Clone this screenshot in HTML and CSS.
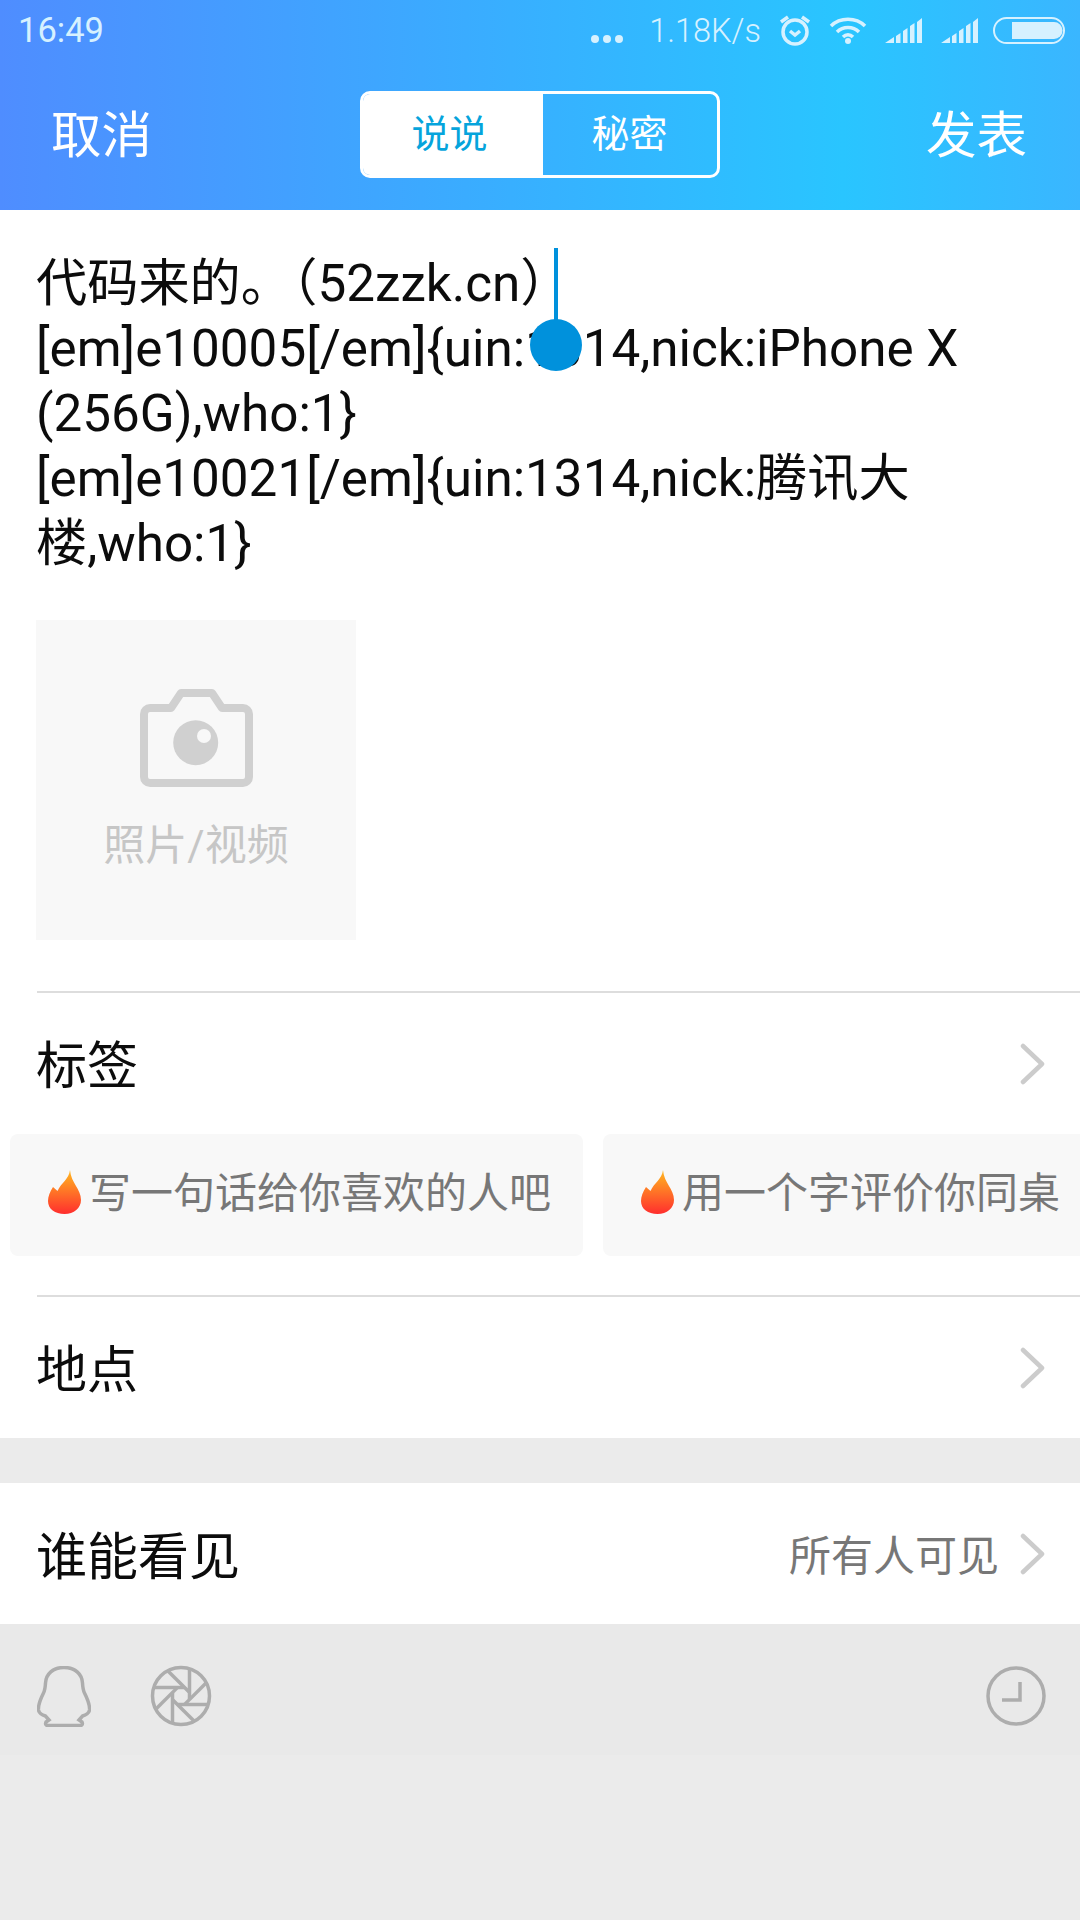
FILE: index.html

```html
<!DOCTYPE html>
<html>
<head>
	<meta charset="utf-8">
	<title>发表说说</title>
	<link rel="stylesheet" href="styles.css">
</head>
<body>
	<div class="page">

		<div class="header">
			<div class="status">
				<span class="time">16:49</span>
				<div class="status-right">
					<svg class="st-dots" width="32" height="10" viewBox="0 0 32 10"><circle cx="4" cy="5" r="4"/><circle cx="16" cy="5" r="4"/><circle cx="28" cy="5" r="4"/></svg>
					<span class="speed">1.18K/s</span>
					<svg class="st-alarm" width="32" height="32" viewBox="0 0 32 32"><circle class="line" cx="16" cy="18" r="12"/><path class="line" d="M11 17l5 4 5-4"/><path class="line" d="M2 8l7-5M30 8l-7-5"/></svg>
					<svg class="st-wifi" width="38" height="28" viewBox="0 0 38 28"><path class="line" d="M2 10C11 1 27 1 36 10"/><path class="line" d="M8 16C14 10 24 10 30 16"/><path class="line" d="M14 21C17 18 21 18 24 21"/><circle cx="19" cy="25" r="3"/></svg>
					<svg class="st-signal" width="38" height="26" viewBox="0 0 38 26"><path d="M0 25L9 19V25ZM11 18L15.500 15V25H11ZM18 13L22.500 10V25H18ZM25 8L29.500 5V25H25ZM32 4L37 0V25H32Z"/></svg>
					<svg class="st-signal" width="38" height="26" viewBox="0 0 38 26"><path d="M0 25L9 19V25ZM11 18L15.500 15V25H11ZM18 13L22.500 10V25H18ZM25 8L29.500 5V25H25ZM32 4L37 0V25H32Z"/></svg>
					<svg class="st-battery" width="72" height="27" viewBox="0 0 72 27"><rect class="thin" x="1" y="1" width="70" height="25" rx="12.500"/><path d="M19 5H61a8.500 8.500 0 0 1 0 17H19Z"/></svg>
				</div>
			</div>
			<div class="nav">
				<span class="nav-btn">取消</span>
				<div class="seg">
					<span class="seg-item seg-on">说说</span>
					<span class="seg-item">秘密</span>
				</div>
				<span class="nav-btn">发表</span>
			</div>
		</div>

		<div class="editor">
			<div class="content">代码来的。（52zzk.cn）<br>[em]e10005[/em]{uin:1314,nick:iPhone X<br>(256G),who:1}<br>[em]e10021[/em]{uin:1314,nick:腾讯大<br>楼,who:1}</div>
			<div class="cursor"></div>
			<div class="cursor-knob"></div>

			<div class="photo">
				<svg class="photo-icon" width="113" height="98" viewBox="0 0 113 98">
					<path d="M10 19H31L41 4H72L82 19H103a6 6 0 0 1 6 6V88a6 6 0 0 1-6 6H10a6 6 0 0 1-6-6V25a6 6 0 0 1 6-6Z"/>
					<circle class="lens" cx="55.700" cy="53.700" r="22.500"/>
					<circle class="glint" cx="64" cy="47" r="7"/>
				</svg>
				<span class="photo-label">照片/视频</span>
			</div>
		</div>

		<div class="divider"></div>
		<div class="row row-tag">
			<span class="row-title">标签</span>
			<svg class="chevron" width="26" height="42" viewBox="0 0 26 42"><path d="M3 3L22 21L3 39"/></svg>
		</div>

		<div class="chips">
			<div class="chip">
				<svg class="flame" width="33" height="44" viewBox="0 0 33 44"><path fill="url(#fire)" d="M22 0C21 9 13 13 9.500 21L5 17C2 22 0 26 0 31C0 39 7 44 16.500 44C26 44 33 38 33 30C33 19 23 13 22 0Z"/></svg>
				<span>写一句话给你喜欢的人吧</span>
			</div>
			<div class="chip">
				<svg class="flame" width="33" height="44" viewBox="0 0 33 44"><path fill="url(#fire)" d="M22 0C21 9 13 13 9.500 21L5 17C2 22 0 26 0 31C0 39 7 44 16.500 44C26 44 33 38 33 30C33 19 23 13 22 0Z"/></svg>
				<span>用一个字评价你同桌</span>
			</div>
		</div>

		<div class="divider"></div>
		<div class="row row-place">
			<span class="row-title">地点</span>
			<svg class="chevron" width="26" height="42" viewBox="0 0 26 42"><path d="M3 3L22 21L3 39"/></svg>
		</div>

		<div class="band"></div>

		<div class="row row-who">
			<span class="row-title">谁能看见</span>
			<span class="row-value">所有人可见</span>
			<svg class="chevron" width="26" height="42" viewBox="0 0 26 42"><path d="M3 3L22 21L3 39"/></svg>
		</div>

		<div class="toolbar">
			<svg class="tool-qq" width="54" height="61" viewBox="0 0 54 61"><path d="M27 1.500C16 1.500 9 8 8.500 17C8.300 21 8 24 6.500 27C3.500 33 1 39 1.500 44C2 47.500 5 49 8.500 50L12 54L9 56C8 58 9 59.500 11 59.500H43C45 59.500 46 58 45 56L42 54L45.500 50C49 49 52 47.500 52.500 44C53 39 50.500 33 47.500 27C46 24 45.700 21 45.500 17C45 8 38 1.500 27 1.500Z"/></svg>
			<svg class="tool-shutter" width="62" height="62" viewBox="-31 -31 62 62">
				<circle r="28.500"/>
				<path d="M8.500-28V3"/>
				<path transform="rotate(45)" d="M8.500-28V3"/>
				<path transform="rotate(90)" d="M8.500-28V3"/>
				<path transform="rotate(135)" d="M8.500-28V3"/>
				<path transform="rotate(180)" d="M8.500-28V3"/>
				<path transform="rotate(225)" d="M8.500-28V3"/>
				<path transform="rotate(270)" d="M8.500-28V3"/>
				<path transform="rotate(315)" d="M8.500-28V3"/>
			</svg>
			<svg class="tool-clock" width="60" height="60" viewBox="0 0 60 60"><circle cx="30" cy="30" r="28"/><path d="M34 16V34H16"/></svg>
		</div>

		<svg class="defs" width="0" height="0"><defs><linearGradient id="fire" x1="0" y1="0" x2="0" y2="1"><stop offset="0" stop-color="#ffb81f"/><stop offset="1" stop-color="#ff2e2e"/></linearGradient></defs></svg>
	</div>
</body>
</html>
```

FILE: styles.css

```css
html, body {
	margin: 0;
	padding: 0;
}

body {
	font-family: Roboto, "Noto Sans CJK SC", sans-serif;
	background-color: #ebebeb;
}

.page {
	position: relative;
	width: 1080px;
	height: 1920px;
	overflow: hidden;
}

.defs {
	position: absolute;
}

/* header */
.header {
	height: 210px;
	background: linear-gradient(90deg, #4f8dff 0%, #29c5ff 78%, #3ab6ff 100%);
	box-shadow: 0 2px 0 #dedede;
	position: relative;
}

.status {
	height: 60px;
	display: flex;
	align-items: center;
	justify-content: space-between;
	padding: 0 15px 0 18px;
	color: #d6f1ff;
	font-weight: 300;
}

.time {
	font-size: 34.500px;
	font-weight: 400;
}

.status-right {
	display: flex;
	align-items: center;
}

.status-right svg {
	fill: #d6f1ff;
}

.status-right .line {
	fill: none;
	stroke: #d6f1ff;
	stroke-width: 3.5;
	stroke-linecap: butt;
}

.status-right .thin {
	fill: none;
	stroke: #d6f1ff;
	stroke-width: 2;
}

.st-dots {
	margin-top: 18px;
	margin-right: 26px;
}

.speed {
	font-size: 32.500px;
	margin-top: 2px;
	margin-right: 18px;
}

.st-alarm {
	margin-right: 18px;
}

.st-wifi {
	margin-right: 18px;
}

.st-signal {
	margin-right: 18px;
	margin-top: 2px;
}

.st-signal + .st-battery {
	margin-left: -4px;
}

.nav {
	height: 148px;
	display: flex;
	align-items: center;
	justify-content: space-between;
	padding: 0 52px 2px 51px;
}

.nav-btn {
	width: 102px;
	color: #fff;
	font-size: 50.500px;
	line-height: 60px;
	margin-top: 3px;
}

.seg {
	width: 360px;
	height: 87px;
	box-sizing: border-box;
	border: 3px solid #fff;
	border-radius: 10px;
	display: flex;
	overflow: hidden;
}

.seg-item {
	width: 174px;
	color: #fff;
	font-size: 38px;
	line-height: 81px;
	text-align: center;
}

.seg-on {
	width: 180px;
	box-sizing: border-box;
	padding-right: 6px;
	background-color: #fff;
	color: #05a4dc;
}

/* text area */
.editor {
	position: relative;
	height: 781px;
	background-color: #fff;
	box-sizing: border-box;
	padding: 41px 0 0 36px;
}

.content {
	font-size: 51.200px;
	line-height: 65px;
	color: #0c0c0c;
	height: 369px;
}

.cursor {
	position: absolute;
	left: 554px;
	top: 38px;
	width: 4px;
	height: 80px;
	background-color: #0091dc;
}

.cursor-knob {
	position: absolute;
	left: 530px;
	top: 109px;
	width: 52px;
	height: 52px;
	border-radius: 50%;
	background-color: #0091dc;
}

.photo {
	width: 320px;
	height: 320px;
	background-color: #f8f8f8;
	box-sizing: border-box;
	padding-top: 69px;
	display: flex;
	flex-direction: column;
	align-items: center;
}

.photo-icon path {
	fill: none;
	stroke: #d0d0d0;
	stroke-width: 8;
	stroke-linejoin: round;
}

.photo-icon .lens {
	fill: #d0d0d0;
}

.photo-icon .glint {
	fill: #f8f8f8;
}

.photo-label {
	margin-top: 31px;
	font-size: 42px;
	line-height: 56px;
	color: #c6c6c6;
}

/* rows */
.divider {
	height: 2px;
	margin-left: 37px;
	background-color: #dddddd;
	box-shadow: -37px 0 0 #fff;
}

.row {
	height: 140px;
	box-sizing: border-box;
	padding: 0 34px 0 36px;
	background-color: #fff;
	display: flex;
	align-items: center;
}

.row-tag {
	height: 141px;
}

.row-place {
	height: 141px;
}

.row-who {
	height: 141px;
}

.row-title {
	flex: 1;
	font-size: 51px;
	color: #0c0c0c;
	margin-top: -4px;
}

.row-who .row-title {
	margin-top: -2px;
}

.row-value {
	font-size: 42px;
	color: #777;
	margin-right: 21px;
	margin-top: -2px;
}

.chevron {
	flex-shrink: 0;
}

.chevron path {
	fill: none;
	stroke: #cccccc;
	stroke-width: 4.500;
	stroke-linecap: round;
	stroke-linejoin: round;
}

.chips {
	height: 161px;
	box-sizing: border-box;
	padding: 0 0 39px 10px;
	background-color: #fff;
	display: flex;
	gap: 20px;
	overflow: hidden;
}

.chip {
	flex-shrink: 0;
	width: 573px;
	height: 122px;
	box-sizing: border-box;
	padding: 0 0 6px 38px;
	background-color: #f8f8f8;
	border-radius: 8px;
	display: flex;
	align-items: center;
	gap: 8px;
	font-size: 42px;
	color: #777;
	white-space: nowrap;
}

.chip span {
	margin-bottom: 6px;
}

.band {
	height: 45px;
	background-color: #ebebeb;
}

/* toolbar */
.toolbar {
	height: 131px;
	box-sizing: border-box;
	padding: 13px 34px 0 37px;
	background-color: #e9e9e9;
	display: flex;
	align-items: center;
}

.toolbar svg {
	fill: none;
	stroke: #adadad;
	stroke-width: 3.500;
}

.tool-shutter {
	margin-left: 59px;
}

.tool-clock {
	margin-left: auto;
}
```
